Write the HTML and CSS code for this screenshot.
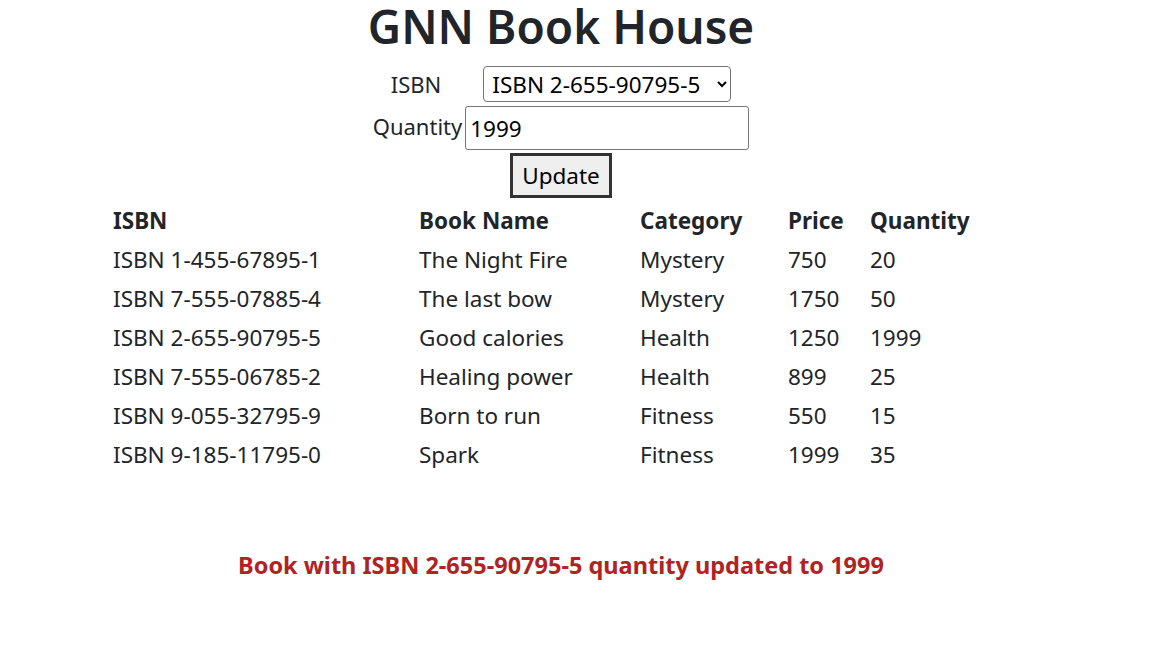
FILE: index.html
```html
<!DOCTYPE html>
<html>
<head>
<meta charset="utf-8">
<title>GNN Book House</title>
<link rel="stylesheet" href="styles.css">
</head>
<body>
<div class="page">
  <h1 class="title">GNN Book House</h1>
  <form class="form">
    <div class="row row-isbn">
      <label class="label">ISBN</label>
      <select class="select">
        <option>ISBN 1-455-67895-1</option>
        <option>ISBN 7-555-07885-4</option>
        <option selected>ISBN 2-655-90795-5</option>
        <option>ISBN 7-555-06785-2</option>
        <option>ISBN 9-055-32795-9</option>
        <option>ISBN 9-185-11795-0</option>
      </select>
    </div>
    <div class="row">
      <label class="label">Quantity</label>
      <input class="input" type="text" value="1999">
    </div>
    <div class="row">
      <button type="button" class="button">Update</button>
    </div>
  </form>
  <table class="books">
    <thead>
      <tr><th class="c1">ISBN</th><th class="c2">Book Name</th><th class="c3">Category</th><th class="c4">Price</th><th class="c5">Quantity</th></tr>
    </thead>
    <tbody>
      <tr><td>ISBN 1-455-67895-1</td><td>The Night Fire</td><td>Mystery</td><td>750</td><td>20</td></tr>
      <tr><td>ISBN 7-555-07885-4</td><td>The last bow</td><td>Mystery</td><td>1750</td><td>50</td></tr>
      <tr><td>ISBN 2-655-90795-5</td><td>Good calories</td><td>Health</td><td>1250</td><td>1999</td></tr>
      <tr><td>ISBN 7-555-06785-2</td><td>Healing power</td><td>Health</td><td>899</td><td>25</td></tr>
      <tr><td>ISBN 9-055-32795-9</td><td>Born to run</td><td>Fitness</td><td>550</td><td>15</td></tr>
      <tr><td>ISBN 9-185-11795-0</td><td>Spark</td><td>Fitness</td><td>1999</td><td>35</td></tr>
    </tbody>
  </table>
  <p class="message">Book with ISBN 2-655-90795-5 quantity updated to 1999</p>
</div>
</body>
</html>
```
FILE: styles.css
```css
html, body {
  margin: 0;
  padding: 0;
  background: #fff;
}
body {
  font-family: "Noto Sans", "Open Sans", sans-serif;
  color: #212529;
  font-size: 22.5px;
}
.page {
  width: 1106px;
  margin-left: 8px;
}
.title {
  margin: 0;
  text-align: center;
  font-size: 46px;
  font-weight: 600;
  line-height: 52px;
}
.form {
  display: flex;
  flex-direction: column;
  align-items: center;
  margin-top: 14px;
}
.row {
  display: flex;
  align-items: center;
  justify-content: center;
}
.label {
  font-size: 22px;
}
.row-isbn .label {
  margin-right: 42px;
}
.select {
  font-family: inherit;
  font-size: 22.5px;
  color: #000;
  height: 36px;
  width: 248px;
  border: 1px solid #767676;
  border-radius: 4px;
  background: #fff;
  padding: 0 2px 0 4px;
}
.input {
  font-family: inherit;
  font-size: 22.5px;
  color: #000;
  width: 284px;
  height: 44px;
  box-sizing: border-box;
  border: 1px solid #767676;
  border-radius: 3px;
  padding: 0 4px;
  margin-left: 3px;
  margin-top: 4px;
}
.button {
  font-family: inherit;
  font-size: 22.5px;
  color: #000;
  background: #efefef;
  border: 3px solid #333;
  width: 102px;
  height: 45px;
  margin-top: 3px;
  padding: 0;
}
.books {
  border-collapse: collapse;
  margin-left: 105px;
  margin-top: 3px;
}
.books th, .books td {
  text-align: left;
  padding: 3px 0;
  line-height: 33px;
  white-space: nowrap;
}
.books th {
  font-weight: 700;
}
.c1 { width: 306px; }
.c2 { width: 221px; }
.c3 { width: 148px; }
.c4 { width: 82px; }
.c5 { width: 120px; }
.message {
  margin: 75px 0 0;
  text-align: center;
  font-weight: 700;
  font-size: 23.5px;
  color: #b22222;
}
```
